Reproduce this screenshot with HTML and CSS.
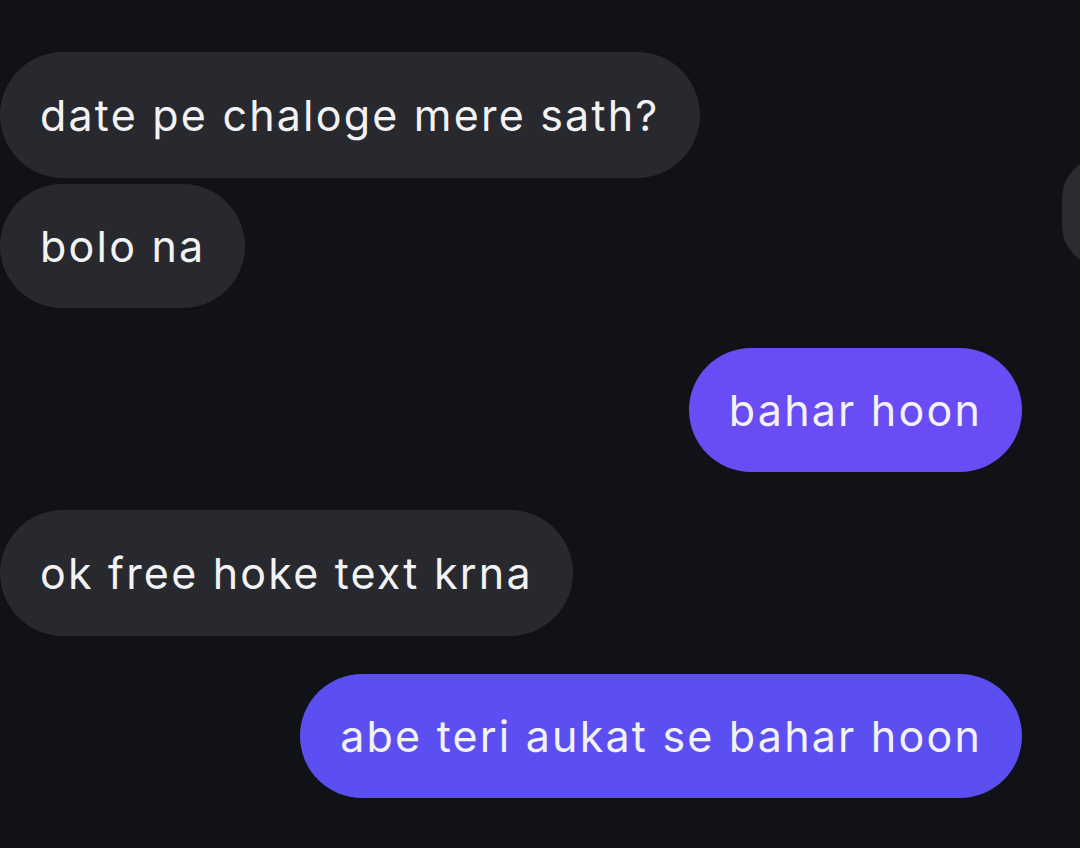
FILE: index.html
```html
<!DOCTYPE html>
<html>
<head>
<meta charset="utf-8">
<link rel="stylesheet" href="styles.css">
</head>
<body>
<div class="chat">
  <div class="msg in first">date pe chaloge mere sath?</div>
  <div class="msg in tight">bolo na</div>
  <div class="msg out">bahar hoon</div>
  <div class="msg in">ok free hoke text krna</div>
  <div class="msg out out2">abe teri aukat se bahar hoon</div>
  <div class="peek"></div>
</div>
</body>
</html>
```
FILE: styles.css
```css
html, body {
  margin: 0;
  padding: 0;
  background: #101218;
}
body {
  width: 1080px;
  height: 848px;
  overflow: hidden;
  font-family: Inter, "Noto Sans", sans-serif;
}
.chat {
  position: relative;
  display: flex;
  flex-direction: column;
  padding-top: 52px;
  height: 848px;
  box-sizing: border-box;
  overflow: hidden;
}
.msg {
  height: 126px;
  box-sizing: border-box;
  display: flex;
  align-items: center;
  padding: 0 40px 0 40px;
  border-radius: 63px;
  font-size: 43px;
  letter-spacing: 2.2px;
  color: #f2f2f4;
  white-space: nowrap;
  margin-top: 38px;
}
.msg.first { margin-top: 0; }
.msg.tight { margin-top: 6px; height: 124px; }
.in {
  align-self: flex-start;
  background: #28292e;
}
.out {
  align-self: flex-end;
  margin-right: 58px;
  background: #6a4cf4;
  height: 124px;
  margin-top: 40px;
}
.out2 {
  background: #5b4ff2;
  margin-top: 38px;
}
.peek {
  position: absolute;
  right: -62px;
  top: 158px;
  width: 80px;
  height: 108px;
  border-radius: 54px;
  background: #2a2c32;
}
```
